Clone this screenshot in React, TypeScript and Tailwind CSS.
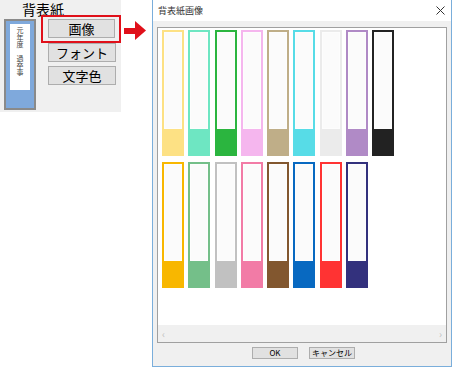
import React from "react";

const row1 = ["#fde184", "#6ee6c2", "#2bb53f", "#f5b6ee", "#bfae88", "#57dce7", "#ebebeb", "#b08ac6", "#222222"];
const row2 = ["#f8b700", "#74bf89", "#c1c1c1", "#f27ba6", "#82572f", "#0869c1", "#ff3333", "#33317d"];

function Swatch({ c }: { c: string }) {
  return (
    <div className="w-[22px] h-[126px] border-2 flex flex-col bg-[#fbfbfb]" style={{ borderColor: c }}>
      <div className="flex-1 border border-white/60" />
      <div className="h-[25px]" style={{ backgroundColor: c }} />
    </div>
  );
}

export default function App() {
  const font = { fontFamily: '"Noto Sans CJK JP", "Noto Sans", sans-serif' };
  return (
    <div className="w-[453px] h-[368px] bg-white flex items-start" style={font}>
      {/* left panel */}
      <div className="w-[121px] h-[112px] bg-[#f0f0f0] flex flex-col shrink-0">
        <div className="h-[19px] pl-[22px] text-[14px] leading-[18px] text-black">背表紙</div>
        <div className="flex">
          <div className="ml-[4px] w-[33px] h-[91px] border-2 border-[#8a8a8a] bg-[#7fa9dc] p-[3px] pb-0 flex flex-col">
            <div className="mx-[1px] h-[66px] bg-white flex justify-center pt-[3px] text-[7px] leading-[8px] text-[#444]">
              <span style={{ writingMode: "vertical-rl" }}>元年度　過卒事</span>
            </div>
          </div>
          <div className="ml-[5px] -mt-[4px] flex flex-col">
            <div className="w-[80px] h-[28px] border-2 border-[#e0101a] p-[2px] pl-[5px] flex">
              <div className="w-[67px] h-[19px] bg-[#e1e1e1] border border-[#adadad] flex items-center justify-center text-[13px] text-black">画像</div>
            </div>
            <div className="ml-[7px] mt-0 w-[68px] h-[19px] bg-[#e1e1e1] border border-[#adadad] flex items-center justify-center text-[13px] text-black">フォント</div>
            <div className="ml-[7px] mt-[4px] w-[68px] h-[19px] bg-[#e1e1e1] border border-[#adadad] flex items-center justify-center text-[13px] text-black">文字色</div>
          </div>
        </div>
      </div>
      {/* arrow */}
      <div className="w-[31px] pt-[21px] pl-[3px] shrink-0">
        <svg width="23" height="20" viewBox="0 0 23 20">
          <rect x="0" y="7" width="12" height="6" fill="#e0101a" />
          <polygon points="11,0 22,9.5 11,19" fill="#e0101a" />
        </svg>
      </div>
      {/* dialog */}
      <div className="w-[300px] h-[367px] border-x border-b border-[#7aaedb] bg-[#f0f0f0] flex flex-col shrink-0">
        <div className="h-[21px] bg-white flex items-center justify-between pl-[5px] pr-[6px]">
          <span className="text-[9px] text-[#333]">背表紙画像</span>
          <svg width="9" height="9" viewBox="0 0 9 9">
            <path d="M0.5 0.5 L8.5 8.5 M8.5 0.5 L0.5 8.5" stroke="#333" strokeWidth="1" />
          </svg>
        </div>
        <div className="mt-[6px] ml-[4px] w-[290px] h-[316px] border border-[#a0a0a0] bg-white flex flex-col">
          <div className="flex-1 pt-[2px] pl-[4px] flex flex-col gap-[6px]">
            <div className="flex gap-[4.25px]">
              {row1.map((c, i) => (
                <Swatch key={i} c={c} />
              ))}
            </div>
            <div className="flex gap-[4.25px]">
              {row2.map((c, i) => (
                <Swatch key={i} c={c} />
              ))}
            </div>
          </div>
          <div className="h-[17px] bg-[#f0f0f0] flex items-center justify-between px-[4px] text-[10px] text-[#c0c0c0]">
            <span>‹</span>
            <span>›</span>
          </div>
        </div>
        <div className="mt-[4px] flex justify-center gap-[11px] pl-[3px]">
          <div className="w-[46px] h-[12px] bg-[#e1e1e1] border border-[#adadad] flex items-center justify-center text-[8px] leading-none text-black">OK</div>
          <div className="w-[46px] h-[12px] bg-[#e1e1e1] border border-[#adadad] flex items-center justify-center text-[8px] leading-none text-black">キャンセル</div>
        </div>
      </div>
    </div>
  );
}
